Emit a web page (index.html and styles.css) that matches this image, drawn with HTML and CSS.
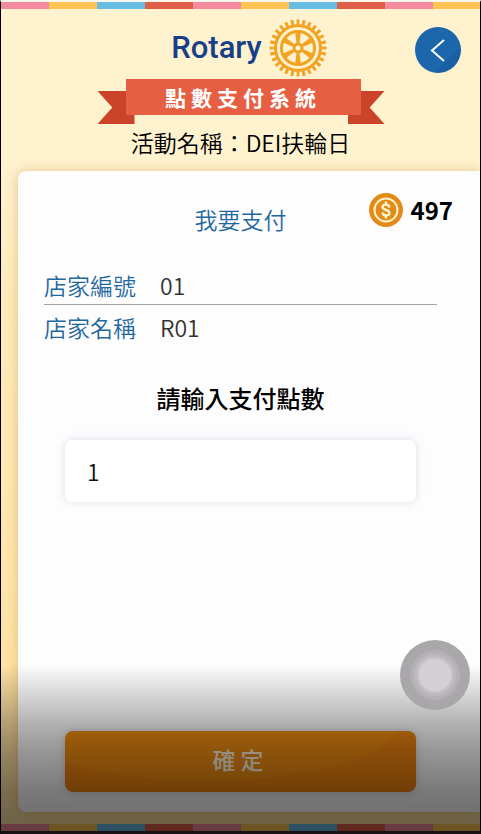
FILE: index.html
```html
<!doctype html>
<html lang="zh-Hant">
    <head>
        <meta charset="UTF-8">
        <meta name="viewport" content="width=device-width, initial-scale=1.0">
        <title>點數支付系統</title>

        <link rel="stylesheet" href="styles.css">
    </head>
    <body>
        <div class="stripes"></div>

        <header class="header">
            <div class="logo">
                <span class="logo__text">Rotary</span>
                <svg class="logo__wheel" viewBox="-29 -29 58 58" aria-hidden="true">
                    <g fill="none" stroke="#f2a324">
                        <circle r="26" stroke-width="5" pathLength="56" stroke-dasharray="1 1" stroke-dashoffset="0.5" />
                        <circle r="22.5" stroke-width="3" />
                        <circle r="16.5" stroke-width="3" />
                        <circle r="4" stroke-width="3" />
                    </g>
                    <g fill="#f2a324">
                        <path id="spoke" d="M-3 -17 L3 -17 L1.5 -5 L-1.5 -5 Z" />
                        <use href="#spoke" transform="rotate(60)" />
                        <use href="#spoke" transform="rotate(120)" />
                        <use href="#spoke" transform="rotate(180)" />
                        <use href="#spoke" transform="rotate(240)" />
                        <use href="#spoke" transform="rotate(300)" />
                    </g>
                </svg>
            </div>

            <a class="back" href="#" aria-label="返回">
                <svg viewBox="0 0 46 46" aria-hidden="true">
                    <path d="M29 13 L17 23.5 L29 34" fill="none" stroke="#fff" stroke-width="2" />
                </svg>
            </a>

            <h1 class="ribbon"><span class="ribbon__text">點數支付系統</span></h1>
            <p class="event">活動名稱：DEI扶輪日</p>
        </header>

        <main class="card">
            <div class="card__head">
                <h2 class="card__title">我要支付</h2>
                <div class="points">
                    <svg class="points__coin" viewBox="0 0 34 34" aria-hidden="true">
                        <circle cx="17" cy="17" r="17" fill="#e38b17" />
                        <circle cx="17" cy="17" r="11.5" fill="none" stroke="#fff3d0" stroke-width="2" />
                        <path d="M20.5 14.5 C20 10.5 13.5 11 13.5 14 C13.5 17.5 20.5 16.5 20.5 20 C20.5 23 14 23.5 13.5 19.5 M17 8.5 V12 M17 22 V25.5" fill="none" stroke="#fff3d0" stroke-width="2.4" />
                    </svg>
                    <span>497</span>
                </div>
            </div>

            <dl class="store">
                <div class="store__row">
                    <dt>店家編號</dt>
                    <dd>01</dd>
                </div>
                <div class="store__row">
                    <dt>店家名稱</dt>
                    <dd>R01</dd>
                </div>
            </dl>

            <form class="pay">
                <label class="pay__label" for="points">請輸入支付點數</label>
                <input class="pay__input" id="points" type="text" inputmode="numeric" value="1">
                <button class="pay__submit" type="submit">確定</button>
            </form>
        </main>

        <div class="stripes"></div>

        <div class="shade"></div>
        <button class="assist" type="button" aria-label="輔助選單"></button>
    </body>
</html>
```

FILE: styles.css
```css
:root {
    --blue: #1f689e;
    --red: #e65f43;
    --dark-red: #cb4429;
}

*,
*::before,
*::after {
    box-sizing: border-box;
    padding: 0;
    margin: 0;
}

body {
    display: flex;
    flex-direction: column;
    min-height: 100vh;
    border: 1px solid #000;
    border-top: 2px solid #fbf7ee;
    border-bottom: 3px solid #3a2a2e;
    background: linear-gradient(#fff2ce, #fff2ce 20%, #fdebbd 35%, #ffe3a6 80%);
    color: #111;
    font-family: "Noto Sans CJK TC", sans-serif;
    font-size: 23px;
    font-weight: 350;
    line-height: 32px;
}

.stripes {
    flex: none;
    height: 7px;
    background: repeating-linear-gradient(90deg, #f48a9e 0 48px, #ffc453 48px 96px, #66bde4 96px 144px, #e05d47 144px 192px);
}

/* header */
.header {
    position: relative;
    display: flex;
    flex-direction: column;
    align-items: center;
    padding-top: 10px;
}

.logo {
    display: flex;
    gap: 7px;
    align-items: center;
    padding-left: 17px;
}

.logo__text {
    color: #173f87;
    font-family: Roboto, sans-serif;
    font-size: 31px;
    font-weight: 500;
}

.logo__wheel {
    width: 58px;
    height: 58px;
}

.back {
    position: absolute;
    top: 18px;
    right: 19px;
    width: 46px;
    height: 46px;
    border-radius: 50%;
    background: linear-gradient(135deg, #1c66ac 70%, #1a5fa4 72%);
}

.back svg {
    display: block;
}

.ribbon {
    position: relative;
    width: 235px;
    margin-top: 2px;
    margin-left: 5px;
    font-size: 21px;
    font-weight: 700;
    line-height: 36px;
    text-align: center;
}

/* tails behind the band */
.ribbon::before,
.ribbon::after {
    position: absolute;
    top: 12px;
    width: 37px;
    height: 33px;
    background: var(--dark-red);
    content: "";
}

.ribbon::before {
    left: -28px;
    clip-path: polygon(0 0, 100% 0, 100% 100%, 0 100%, 40% 50%);
}

.ribbon::after {
    right: -24px;
    clip-path: polygon(0 0, 100% 0, 60% 50%, 100% 100%, 0 100%);
}

.ribbon__text {
    position: relative;
    z-index: 1;
    display: block;
    background: var(--red);
    color: #fff;
    letter-spacing: 5px;
}

.event {
    margin-top: 11px;
    color: #000;
}

/* card */
.card {
    display: flex;
    flex: 1;
    flex-direction: column;
    padding: 22px 27px 20px 10px;
    margin: 13px 0 12px 17px;
    border-radius: 8px 0 0 8px;
    background: #fefdfe;
    box-shadow: 0 0 12px rgb(170 120 30 / 35%);
}

.card__head {
    display: grid;
    grid-template-columns: 1fr auto 1fr;
}

.card__title {
    grid-column: 2;
    padding-top: 10px;
    color: var(--blue);
    font-size: 23px;
    font-weight: 350;
}

.points {
    display: flex;
    gap: 8px;
    align-items: center;
    justify-content: flex-end;
    height: 34px;
    color: #000;
    font-size: 24px;
    font-weight: 700;
}

.points__coin {
    width: 34px;
    height: 34px;
}

.store {
    padding-inline: 16px;
    margin-top: 34px;
}

.store__row {
    display: flex;
    gap: 24px;
    padding-bottom: 3px;
}

.store__row + .store__row {
    padding-top: 6px;
    border-top: 1px solid #a5a5a8;
}

.store dt {
    color: var(--blue);
}

.store dd {
    color: #333;
}

/* form */
.pay {
    display: flex;
    flex: 1;
    flex-direction: column;
    padding-inline: 37px;
    margin-top: 36px;
}

.pay__label {
    color: #000;
    font-size: 24px;
    font-weight: 500;
    text-align: center;
}

.pay__input {
    width: 100%;
    height: 62px;
    padding-inline: 22px;
    margin-top: 26px;
    border: 0;
    border-radius: 7px;
    background: #fff;
    box-shadow: 0 0 10px rgb(90 90 140 / 20%);
    color: #111;
    font: inherit;
}

.pay__submit {
    height: 61px;
    padding-bottom: 6px;
    margin-top: auto;
    border: 0;
    border-radius: 8px;
    background:
        radial-gradient(ellipse 56% 102% at 40% -20%, #ee8c12 99%, transparent 100%),
        #ec8310;
    box-shadow: 0 0 10px rgb(90 90 140 / 30%);
    color: #fff3dc;
    font: inherit;
    font-weight: 500;
    letter-spacing: 5px;
}

/* dark fade over the bottom of the screen */
.shade {
    position: fixed;
    inset: auto 0 0;
    height: 170px;
    background: linear-gradient(transparent, rgb(0 0 0 / 28%) 33%, rgb(0 0 0 / 40%) 50%, rgb(0 0 0 / 52%) 75%, rgb(0 0 0 / 58%));
    pointer-events: none;
}

.assist {
    position: fixed;
    right: 11px;
    bottom: 124px;
    width: 70px;
    height: 70px;
    border: 0;
    border-radius: 50%;
    background: radial-gradient(circle closest-side, #d2d0d2 0 46%, #c5c3c5 47% 52%, #bbb9bb 53% 60%, #b3b1b3 61% 70%, #a9a7aa 71% 100%);
}
```
